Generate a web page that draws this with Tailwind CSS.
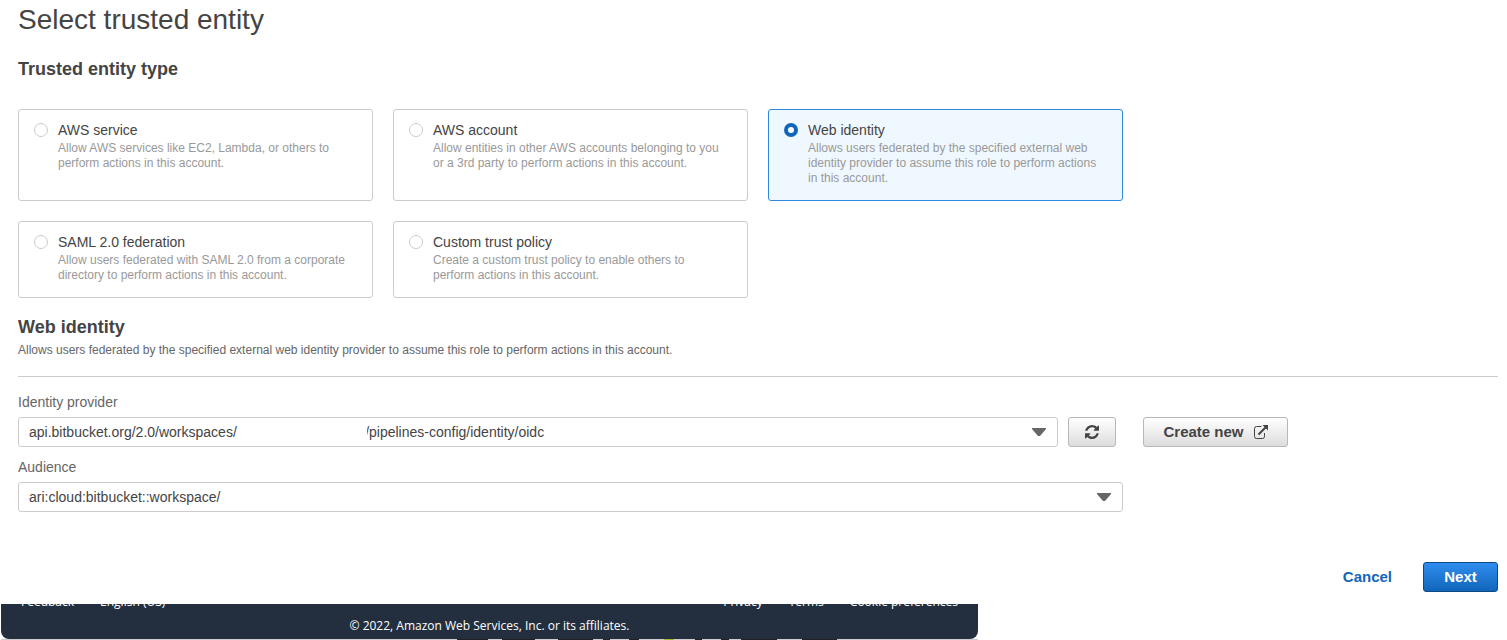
<!DOCTYPE html>
<html lang="en">
<head>
  <meta charset="UTF-8" />
  <meta name="viewport" content="width=device-width, initial-scale=1" />
  <title>Select trusted entity</title>
  <!-- Tailwind CSS CDN -->
  <script src="https://cdn.jsdelivr.net/npm/@tailwindcss/browser@4"></script>
</head>
<body class="bg-white font-['Liberation_Sans',Arial,sans-serif] text-[#444]">
  <main class="pl-[18px] pr-[9px]">
    <h1 class="pt-1 text-[28px] leading-8">Select trusted entity</h1>

    <form>
      <!-- Trusted entity type -->
      <fieldset class="mt-[21px]">
        <legend class="mb-7 text-lg leading-6 font-bold">Trusted entity type</legend>
        <div class="grid max-w-[1105px] grid-cols-3 gap-5">
          <label class="flex gap-[10px] rounded-[3px] border border-[#ccc] px-[15px] pt-[11px] pb-[14px]">
            <input type="radio" name="entity-type" class="mt-[2px] size-[14px] shrink-0 appearance-none rounded-full border border-[#ccc] bg-white checked:border-[4px] checked:border-[#1166bb]" />
            <span class="block">
              <span class="block text-sm leading-[18px]">AWS service</span>
              <span class="mt-[2px] block text-xs leading-[15px] text-[#999]">Allow AWS services like EC2, Lambda, or others to<br />perform actions in this account.</span>
            </span>
          </label>
          <label class="flex gap-[10px] rounded-[3px] border border-[#ccc] px-[15px] pt-[11px] pb-[14px]">
            <input type="radio" name="entity-type" class="mt-[2px] size-[14px] shrink-0 appearance-none rounded-full border border-[#ccc] bg-white checked:border-[4px] checked:border-[#1166bb]" />
            <span class="block">
              <span class="block text-sm leading-[18px]">AWS account</span>
              <span class="mt-[2px] block text-xs leading-[15px] text-[#999]">Allow entities in other AWS accounts belonging to you<br />or a 3rd party to perform actions in this account.</span>
            </span>
          </label>
          <label class="flex gap-[10px] rounded-[3px] border border-[#2e8ae0] bg-[#f0f8ff] px-[15px] pt-[11px] pb-[14px]">
            <input type="radio" name="entity-type" checked class="mt-[2px] size-[14px] shrink-0 appearance-none rounded-full border border-[#ccc] bg-white checked:border-[4px] checked:border-[#1166bb]" />
            <span class="block">
              <span class="block text-sm leading-[18px]">Web identity</span>
              <span class="mt-[2px] block text-xs leading-[15px] text-[#999]">Allows users federated by the specified external web<br />identity provider to assume this role to perform actions<br />in this account.</span>
            </span>
          </label>
          <label class="flex gap-[10px] rounded-[3px] border border-[#ccc] px-[15px] pt-[11px] pb-[14px]">
            <input type="radio" name="entity-type" class="mt-[2px] size-[14px] shrink-0 appearance-none rounded-full border border-[#ccc] bg-white checked:border-[4px] checked:border-[#1166bb]" />
            <span class="block">
              <span class="block text-sm leading-[18px]">SAML 2.0 federation</span>
              <span class="mt-[2px] block text-xs leading-[15px] text-[#999]">Allow users federated with SAML 2.0 from a corporate<br />directory to perform actions in this account.</span>
            </span>
          </label>
          <label class="flex gap-[10px] rounded-[3px] border border-[#ccc] px-[15px] pt-[11px] pb-[14px]">
            <input type="radio" name="entity-type" class="mt-[2px] size-[14px] shrink-0 appearance-none rounded-full border border-[#ccc] bg-white checked:border-[4px] checked:border-[#1166bb]" />
            <span class="block">
              <span class="block text-sm leading-[18px]">Custom trust policy</span>
              <span class="mt-[2px] block text-xs leading-[15px] text-[#999]">Create a custom trust policy to enable others to<br />perform actions in this account.</span>
            </span>
          </label>
        </div>
      </fieldset>

      <!-- Web identity -->
      <section>
        <h2 class="mt-[17px] text-lg leading-6 font-bold">Web identity</h2>
        <p class="mt-[3px] border-b border-[#ccc] pb-[18px] text-xs leading-4 text-[#666]">Allows users federated by the specified external web identity provider to assume this role to perform actions in this account.</p>

        <label for="provider" class="mt-4 block text-sm leading-[18px] text-[#666]">Identity provider</label>
        <div class="mt-[6px] flex">
          <div class="relative w-full max-w-[1040px]">
            <select id="provider" class="block h-[30px] w-full appearance-none rounded-[3px] border border-[#ccc] bg-white px-[10px] text-sm text-[#444]">
              <option>api.bitbucket.org/2.0/workspaces/&nbsp;&nbsp;&nbsp;&nbsp;&nbsp;&nbsp;&nbsp;&nbsp;&nbsp;&nbsp;&nbsp;&nbsp;&nbsp;&nbsp;&nbsp;&nbsp;&nbsp;&nbsp;&nbsp;&nbsp;&nbsp;&nbsp;&nbsp;&nbsp;&nbsp;&nbsp;&nbsp;&nbsp;&nbsp;&nbsp;&nbsp;&nbsp;&nbsp;/pipelines-config/identity/oidc</option>
            </select>
            <!-- Covers the workspace name -->
            <span class="pointer-events-none absolute top-[10px] left-[224px] h-4 w-[125px] bg-white"></span>
            <svg class="pointer-events-none absolute top-[11px] right-3 h-2 w-[14px]" viewBox="0 0 14 8" fill="#666"><path d="M0 0h14v1L8 8H6L0 1z" /></svg>
          </div>
          <button type="button" aria-label="Refresh" class="ml-[10px] flex h-[30px] w-12 shrink-0 items-center justify-center rounded-[3px] border border-[#b8b8b8] bg-linear-to-b from-white to-[#ddd]">
            <svg class="size-[14px]" viewBox="0 0 1536 1536" fill="#444"><path d="M1511 928q0 5-1 7-64 268-268 434.500T764 1536q-146 0-282.500-55T238 1324l-129 129q-19 19-45 19t-45-19-19-45V960q0-26 19-45t45-19h448q26 0 45 19t19 45-19 45l-137 137q71 66 161 102t187 36q134 0 250-65t186-179q11-17 53-117 8-23 30-23h192q13 0 22.500 9.500t9.500 22.500zm25-800v448q0 26-19 45t-45 19h-448q-26 0-45-19t-19-45 19-45l138-138Q969 256 768 256q-134 0-250 65T332 500q-11 17-53 117-8 23-30 23H50q-13 0-22.500-9.500T18 608v-7q65-268 270-434.500T768 0q146 0 284 55.500T1297 212l130-129q19-19 45-19t45 19 19 45z" /></svg>
          </button>
          <button type="button" class="ml-[27px] flex h-[30px] w-[145px] shrink-0 items-center justify-center gap-[10px] rounded-[3px] border border-[#b8b8b8] bg-linear-to-b from-white to-[#ddd] text-[15px] font-bold">
            Create new
            <svg class="size-[14px]" viewBox="0 0 14 14" fill="none" stroke="#444"><path d="M7.500 1.500H2.500a2 2 0 0 0-2 2v8a2 2 0 0 0 2 2h6a2 2 0 0 0 2-2V8" /><path stroke-width="2" d="M4.500 9.500 11.500 2.500" /><path fill="#444" stroke="none" d="M8.500 0H14v5.500z" /></svg>
          </button>
        </div>

        <label for="audience" class="mt-[11px] block text-sm leading-[18px] text-[#666]">Audience</label>
        <div class="relative mt-[6px] max-w-[1105px]">
          <select id="audience" class="block h-[30px] w-full appearance-none rounded-[3px] border border-[#ccc] bg-white px-[10px] text-sm text-[#444]">
            <option>ari:cloud:bitbucket::workspace/</option>
          </select>
          <svg class="pointer-events-none absolute top-[11px] right-3 h-2 w-[14px]" viewBox="0 0 14 8" fill="#666"><path d="M0 0h14v1L8 8H6L0 1z" /></svg>
        </div>
      </section>

      <!-- Actions -->
      <div class="mt-[50px] mb-3 flex items-center justify-end gap-[31px]">
        <a href="#" class="text-[15px] font-bold text-[#1166bb]">Cancel</a>
        <button type="submit" class="h-[30px] w-[75px] rounded-[3px] border border-[#0d4a85] bg-linear-to-b from-[#2e8def] to-[#1166bb] text-[15px] font-bold text-white">Next</button>
      </div>
    </form>
  </main>

  <!-- Footer -->
  <footer class="max-w-[978px] pl-px">
    <div class="h-[35px] overflow-hidden rounded-b-lg bg-[#232f3e] px-5 font-['Open_Sans','Noto_Sans',sans-serif] text-xs leading-5 font-medium text-white">
      <nav class="-mt-3 flex justify-between">
        <div class="flex gap-[26px]">
          <a href="#">Feedback</a>
          <a href="#">English (US)</a>
        </div>
        <div class="flex gap-[26px]">
          <a href="#">Privacy</a>
          <a href="#">Terms</a>
          <a href="#">Cookie preferences</a>
        </div>
      </nav>
      <p class="mt-1 text-center">© 2022, Amazon Web Services, Inc. or its affiliates.</p>
    </div>
    <!-- Edge of the artwork behind the footer -->
    <svg class="block h-px w-full bg-[#ccc]" viewBox="0 0 977 1" preserveAspectRatio="none">
      <path fill="#222" d="M456 0h31v1h-31zM501 0h33v1h-33zM557 0h35v1h-35zM602 0h7v1h-7zM628 0h10v1h-10zM694 0h7v1h-7zM720 0h8v1h-8zM740 0h36v1h-36zM801 0h35v1h-35z" />
      <path fill="#a8b820" d="M663 0h10v1h-10z" />
    </svg>
  </footer>
</body>
</html>
